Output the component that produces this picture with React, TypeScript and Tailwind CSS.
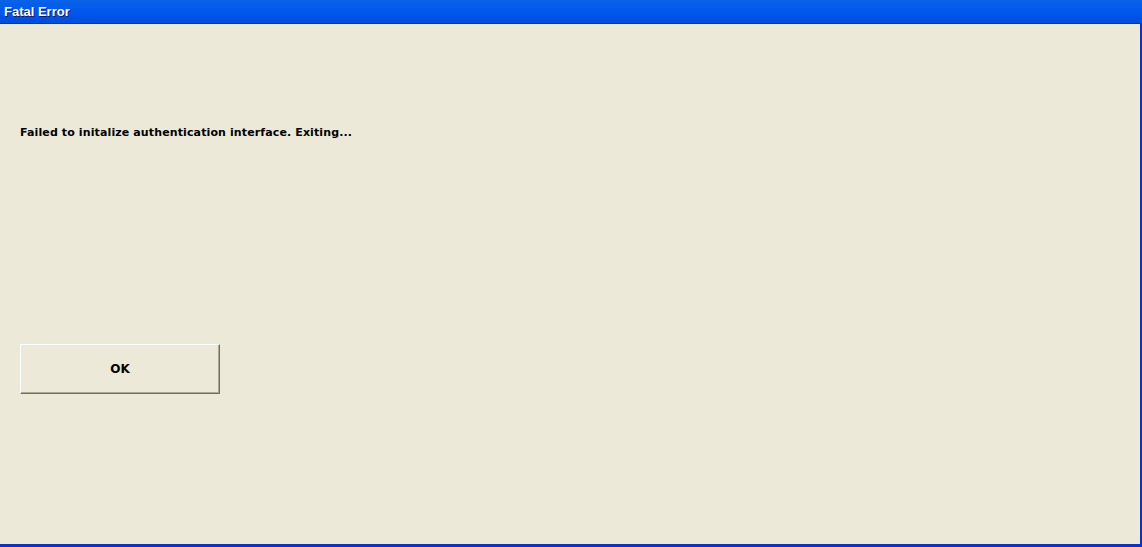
export default function App() {
  return (
    <div className="flex h-[547px] w-[1142px] flex-col overflow-hidden bg-[#ECE9D8]">
      {/* title bar */}
      <div className="flex h-[24px] items-center border-b border-[#0831B8] bg-gradient-to-b from-[#0A62E6] via-[#0058EE] to-[#004CDC] pl-[4px]">
        <span
          className="text-[13px] font-bold leading-none text-white [text-shadow:1px_1px_0_#0A1C6E]"
          style={{ fontFamily: '"Liberation Sans", Arial, sans-serif' }}
        >
          Fatal Error
        </span>
      </div>

      <div className="flex flex-1 border-r-2 border-b-[3px] border-[#0831D9]">
        <div className="flex flex-1 flex-col pl-[20px] pt-[102px]">
          <p
            className="text-[11px] font-bold leading-[13px] tracking-[0.12px] text-black"
            style={{ fontFamily: '"DejaVu Sans", sans-serif' }}
          >
            Failed to initalize authentication interface. Exiting...
          </p>

          <button
            className="mt-[205px] flex h-[50px] w-[200px] items-center justify-center border border-t-white border-l-white border-r-[#716F64] border-b-[#716F64] bg-[#ECE9D8] shadow-[inset_-1px_-1px_0_#ACA899] text-[12px] font-bold text-black"
            style={{ fontFamily: '"DejaVu Sans", sans-serif' }}
          >
            OK
          </button>
        </div>
      </div>
    </div>
  );
}
